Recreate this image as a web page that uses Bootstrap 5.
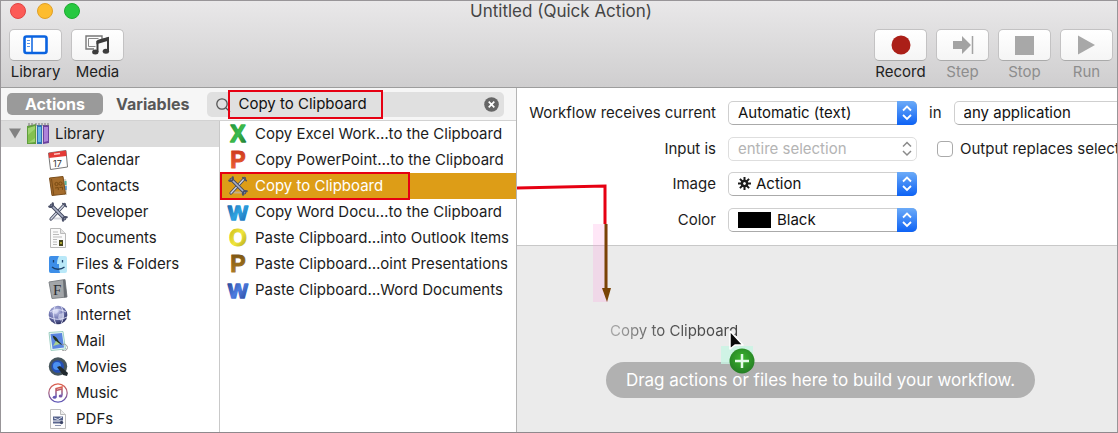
<!DOCTYPE html>
<html lang="en">
<head>
<meta charset="utf-8">
<meta name="viewport" content="width=device-width, initial-scale=1">
<title>Untitled (Quick Action)</title>
<link href="https://cdn.jsdelivr.net/npm/bootstrap@5.3.0/dist/css/bootstrap.min.css" rel="stylesheet">
<style>
body{font-family:Inter,"Liberation Sans",sans-serif;font-size:15px;line-height:20px;color:#1c1c1c;background:#fff}
.app-window{border:1px solid #989598;border-bottom-color:#8f898d;overflow:hidden;min-height:100vh}
.title-area{background:linear-gradient(#e9e8e9,#cfcecf);border-bottom:1px solid #9d9d9d;padding:0 4px 5px 8px}
.title-row{height:20px;position:relative}
.title-row h1{font-size:17px;line-height:20px;font-weight:400;color:#454545;margin:0}
.lights{position:absolute;left:1px;top:2px;gap:11px}
.light{width:16px;height:16px;border-radius:50%;border:1px solid}
.light.close-dot{background:#fc5b57;border-color:#e04543}
.light.min-dot{background:#fdbc2e;border-color:#e0a028}
.light.max-dot{background:#27c840;border-color:#1daa30}
.tool{border:0;background:none;padding:0;width:53px;color:#222;font-size:15px;line-height:20px}
.tool:disabled{color:#8d8d8d}
.tool-face{height:32px;border:1px solid #c3c2c3;border-bottom-color:#aaa;border-radius:5px;background:linear-gradient(#fff,#f5f5f5);margin-bottom:1px}
.tool-label{display:flex;justify-content:center;white-space:nowrap}
.tool-gap{gap:9px}
.left-pane{width:516px;border-right:1px solid #b5b5b5}
.filter-bar{height:33px;background:#f6f6f6;border-bottom:1px solid #d2d2d2;padding:0 12px 0 6px;gap:13px}
.tab-btn{border:0;border-radius:5px;height:22px;line-height:20px;padding:0;font-weight:700;font-size:16px;background:none;color:#585858}
.tab-btn.on{background:#9a9a9a;color:#fff;width:96px}
.search-field{background:#e0e0e0;border-radius:5px;height:25px;position:relative;margin-left:5px;padding:0 5px 0 31px}
.search-field input{border:0;background:none;outline:0;padding:0;width:100%;color:#111}
.search-icon{position:absolute;left:8px;top:5px}
.mark-box{position:absolute;border:2px solid #e60012;pointer-events:none;z-index:2}
.search-field .mark-box{left:21px;right:121px;top:-2px;bottom:-2px}
.clear-btn{border:0;background:none;padding:0;line-height:0}
.library-pane{width:219px;border-right:1px solid #c9c9c9}
.tree-row{flex:1 1 0;min-height:20px;display:flex;align-items:center;padding-left:47px;gap:8px;color:inherit;text-decoration:none}
.tree-row svg{flex:none}
.tree-row.top{background:#dcdcdc;padding-left:8px;gap:6px}
.act-row{height:26px;display:flex;align-items:center;gap:7px;padding-left:8px;position:relative;color:inherit;text-decoration:none;white-space:nowrap}
.act-row.sel{background:#dd9d17;color:#fff}
.act-row .mark-box{left:0;right:106px;top:-1px;bottom:-1px}
.settings{border-bottom:1px solid #c8c8c8;padding:12px 0 12px 0;display:grid;row-gap:9px;height:158px}
.set-row{display:flex;align-items:center;height:26px;white-space:nowrap}
.set-row>.set-label{width:199px;text-align:right;flex:none;margin-right:12px}
.popup{position:relative;width:189px;flex:none}
.popup select{appearance:none;width:100%;height:24px;border:1px solid #cfcfcf;border-bottom-color:#aaa;border-radius:5px;background:#fff;padding:0 34px 0 9px;color:#111;line-height:20px;outline:0}
.popup select:disabled{color:#b4b4b4;border-color:#dedede;opacity:1}
.popup .knob{position:absolute;right:0;top:0;pointer-events:none}
.popup .lead-icon{position:absolute;left:9px;top:4px;pointer-events:none}
.popup.gear select{padding-left:27px}
.popup.swatch select{padding-left:48px}
.swatch-chip{position:absolute;left:10px;top:4px;width:33px;height:16px;background:#000;pointer-events:none}
.out-check{appearance:none;width:16px;height:16px;border:1px solid #aaa;border-radius:4px;background:#fff;margin:0 7px 0 20px;flex:none}
.drop-area{background:#ebebeb;padding:116px 0 0 7px}
.drop-pill{background:#b1b1b1;color:#fff;border-radius:18px;font-size:17px;line-height:24px;padding:6px 20px;white-space:nowrap}
.pane-right{position:relative;min-width:0}
.arrow-line{position:absolute;left:0;top:94px;pointer-events:none}
.drag-ghost{position:absolute;left:93px;top:233px;background:linear-gradient(90deg,#aaa,#555 40%,#444);-webkit-background-clip:text;background-clip:text;color:transparent;white-space:nowrap}
.drag-cursor{position:absolute;left:200px;top:238px;pointer-events:none}
.ltr{font-family:"Liberation Sans",sans-serif;font-weight:700;overflow:visible;stroke-linejoin:round}
</style>
</head>
<body>
<svg width="0" height="0" class="position-absolute" aria-hidden="true">
<defs>
<linearGradient id="gBlue" x1="0" y1="0" x2="0" y2="1"><stop offset="0" stop-color="#6cabf8"/><stop offset="1" stop-color="#0d62f5"/></linearGradient>
<linearGradient id="gX" x1="0" y1="0" x2="1" y2="1"><stop offset="0" stop-color="#1f8f3c"/><stop offset=".5" stop-color="#3cba4c"/><stop offset="1" stop-color="#1c6f2c"/></linearGradient>
<linearGradient id="gP" x1="0" y1="0" x2="0" y2="1"><stop offset="0" stop-color="#c8321a"/><stop offset="1" stop-color="#f26a38"/></linearGradient>
<linearGradient id="gW" x1="0" y1="0" x2="1" y2="1"><stop offset="0" stop-color="#1d5ea8"/><stop offset=".5" stop-color="#2fa3e0"/><stop offset="1" stop-color="#1a61ae"/></linearGradient>
<linearGradient id="gO" x1="0" y1="0" x2="1" y2="1"><stop offset="0" stop-color="#c4b414"/><stop offset=".5" stop-color="#f0e63c"/><stop offset="1" stop-color="#a89a10"/></linearGradient>
<linearGradient id="gB" x1="0" y1="0" x2="0" y2="1"><stop offset="0" stop-color="#75500f"/><stop offset="1" stop-color="#b58426"/></linearGradient>
<linearGradient id="gV" x1="0" y1="0" x2="1" y2="1"><stop offset="0" stop-color="#27418f"/><stop offset=".5" stop-color="#4d7ce0"/><stop offset="1" stop-color="#27408e"/></linearGradient>
<radialGradient id="gGlobe" cx=".4" cy=".3" r=".7"><stop offset="0" stop-color="#c9cdf0"/><stop offset=".6" stop-color="#6a70ac"/><stop offset="1" stop-color="#2c3060"/></radialGradient>
<linearGradient id="gMus" x1="0" y1="0" x2="0" y2="1"><stop offset="0" stop-color="#e0604a"/><stop offset="1" stop-color="#5a55b8"/></linearGradient>
<radialGradient id="gAdd" cx=".5" cy=".4" r=".6"><stop offset="0" stop-color="#3db52e"/><stop offset="1" stop-color="#247d24"/></radialGradient>
<symbol id="tools" viewBox="0 0 20 20"><path d="M5.500 16.500h9" stroke="#b9bcc8" stroke-width="2" opacity=".6"/><g fill="none" stroke-linecap="round"><path d="M16.500 2.500 3 17" stroke="#444a60" stroke-width="3.200"/><path d="M16.500 2.500 3 17" stroke="#cfd3e0" stroke-width="1.400"/><path d="M3.500 3.500 16.500 16.500" stroke="#444a60" stroke-width="3.600"/><path d="M3.500 3.500 16.500 16.500" stroke="#aab0c6" stroke-width="1.700"/><path d="M1.200 4.500c2.500 1.200 4.300-.500 3.600-3.300M15 18.800c-.800-2.500 1-4.300 3.800-3.600" stroke="#4a5068" stroke-width="2"/><path d="m14.800 1.500 3.500 3.200" stroke="#4a5068" stroke-width="1.600"/></g></symbol>
<symbol id="knobOn" viewBox="0 0 20 24"><path d="M0 0h15a5 5 0 0 1 5 5v14a5 5 0 0 1-5 5H0z" fill="url(#gBlue)"/><path d="M6 9.500 10 5.500 14 9.500M6 14 10 18 14 14" fill="none" stroke="#fff" stroke-width="1.800"/></symbol>
</defs>
</svg>

<div class="app-window d-flex flex-column">
  <header class="title-area">
    <div class="title-row text-center">
      <div class="lights d-flex" aria-hidden="true">
        <span class="light close-dot"></span>
        <span class="light min-dot"></span>
        <span class="light max-dot"></span>
      </div>
      <h1>Untitled (Quick Action)</h1>
    </div>
    <div class="d-flex justify-content-between pt-2">
      <div class="d-flex tool-gap">
        <button class="tool" type="button"><span class="tool-face d-flex align-items-center justify-content-center"><svg width="25" height="20" viewBox="0 0 25 20"><rect x="1.500" y="1.500" width="22" height="16.500" rx="2" fill="#fff" stroke="#0a63e0" stroke-width="2.600"/><path d="M9 2v16" stroke="#0a63e0" stroke-width="1.500"/><path d="M4 5.500h3M4 8.500h3M4 11.500h3" stroke="#5b95e8" stroke-width="1.200"/></svg></span><span class="tool-label">Library</span></button>
        <button class="tool" type="button"><span class="tool-face d-flex align-items-center justify-content-center"><svg width="25" height="20" viewBox="0 0 25 20"><path d="M17 4V1H1v13h8" fill="none" stroke="#777" stroke-width="1.400"/><path d="M13.500 3.500h-10v8h7" fill="none" stroke="#888"/><path d="M12.500 6 23 3v13M12.500 6v11" fill="none" stroke="#3c3c3c" stroke-width="2"/><path d="M11.500 5.800 24 2v3.500L11.500 9.300z" fill="#3c3c3c"/><ellipse cx="10.300" cy="17" rx="3.200" ry="2.500" fill="#3c3c3c"/><ellipse cx="20.900" cy="16.300" rx="3.200" ry="2.500" fill="#3c3c3c"/></svg></span><span class="tool-label">Media</span></button>
      </div>
      <div class="d-flex tool-gap">
        <button class="tool" type="button"><span class="tool-face d-flex align-items-center justify-content-center"><svg width="20" height="20"><circle cx="10" cy="10" r="9.500" fill="#ab1f18"/></svg></span><span class="tool-label">Record</span></button>
        <button class="tool" type="button" disabled><span class="tool-face d-flex align-items-center justify-content-center"><svg width="22" height="20"><path d="M1 6h9V1l9 9-9 9v-5H1z" fill="#a3a3a3"/><path d="M20.500 1v18" stroke="#a3a3a3" stroke-width="1.500"/></svg></span><span class="tool-label">Step</span></button>
        <button class="tool" type="button" disabled><span class="tool-face d-flex align-items-center justify-content-center"><svg width="19" height="19"><path d="M0 0h19v19H0z" fill="#a8a8a8"/></svg></span><span class="tool-label">Stop</span></button>
        <button class="tool" type="button" disabled><span class="tool-face d-flex align-items-center justify-content-center"><svg width="17" height="20"><path d="M0 .500 17 10 0 19.500z" fill="#a8a8a8"/></svg></span><span class="tool-label">Run</span></button>
      </div>
    </div>
  </header>

  <main class="d-flex flex-grow-1 overflow-hidden">
    <section class="left-pane d-flex flex-column flex-shrink-0">
      <div class="filter-bar d-flex align-items-center">
        <button class="tab-btn on" type="button">Actions</button>
        <button class="tab-btn" type="button">Variables</button>
        <div class="search-field d-flex align-items-center flex-grow-1">
          <svg class="search-icon" width="16" height="16"><circle cx="7" cy="7" r="5.200" fill="none" stroke="#555" stroke-width="1.300"/><path d="m11 11 4 4" stroke="#555" stroke-width="1.300"/></svg>
          <input type="text" aria-label="Search actions" value="Copy to Clipboard">
          <button class="clear-btn" type="button" aria-label="Clear search"><svg width="15" height="15"><circle cx="7.500" cy="7.500" r="7.300" fill="#666"/><path d="m4.700 4.700 5.600 5.600m0-5.600-5.600 5.600" stroke="#fff" stroke-width="1.700"/></svg></button>
          <span class="mark-box"></span>
        </div>
      </div>
      <div class="d-flex flex-grow-1">
        <nav class="library-pane d-flex flex-column" aria-label="Library">
          <a href="#" class="tree-row top"><svg width="12" height="11"><path d="M0 .500h12L6 10.500z" fill="#828282"/></svg><svg width="22" height="22" viewBox="0 0 22 22"><path d="M0 3 9 1v20H0z" fill="#5f9e3c"/><path d="M1 5 8 3v16l-7 1z" fill="#9fd370"/><path d="M1 12 8 6v9l-7 5z" fill="#84c04f"/><path d="M10 2h5v19h-5z" fill="#2e74b6"/><path d="M11 4h3v15h-3z" fill="#6cb8e6"/><path d="M16 2h6v18l-6 1z" fill="#6b429f"/><path d="M17 4h4v14l-4 1z" fill="#ae84da"/><path d="M2 0v3M5 0v3M9 0v3M12 0v3M15 0v3M18 0v3M21 0v3" stroke="#777"/></svg><span>Library</span></a>
          <a href="#" class="tree-row"><svg width="20" height="20" viewBox="0 0 20 20"><path d="M.500 3 18 .500 19.500 17 2.500 19.500z" fill="#fff" stroke="#777"/><path d="M.500 3 18 .500 18.500 6 1 8z" fill="#e33a36"/><path d="m6 4.300 6-.900" stroke="#ffc8c4" stroke-width="1.500"/><text x="5" y="16.500" font-size="9" fill="#333">17</text></svg><span>Calendar</span></a>
          <a href="#" class="tree-row"><svg width="20" height="20" viewBox="0 0 20 20"><path d="M16 3h2l1 4v12h-3z" fill="#d8d4c8"/><path d="M16.500 5h2v4h-2z" fill="#50b4a0"/><path d="M16.800 10h2v4h-2z" fill="#599bd2"/><path d="M1.500 2 15 .500 17.500 18 4 19.500z" fill="#a46c2c" stroke="#7a4d1a"/><path d="M3.500 3 5.800 19" stroke="#7a4d1a"/><g fill="none" stroke="#7a4b12"><circle cx="8.500" cy="8" r="1.600"/><circle cx="12.500" cy="7.600" r="1.600"/><path d="m7 12 3.300-.400v2.500M11.500 11.500l3-.300v2.500"/></g></svg><span>Contacts</span></a>
          <a href="#" class="tree-row"><svg width="20" height="20"><use href="#tools"/></svg><span>Developer</span></a>
          <a href="#" class="tree-row"><svg width="20" height="20" viewBox="0 0 20 20"><path d="M2.500.500h10l5 5v14h-15z" fill="#fafafa" stroke="#b8b8b8"/><path d="M12.500.500v5h5" fill="#e3e3e3" stroke="#bbb"/><path d="M5 4h5M5 6.500h6M5 9h9M5 11.500h4M5 14h4M5 16.500h4" stroke="#bbb"/><path d="M11 12h4v6h-4z" fill="#45451d"/><path d="M12 14h2v2h-2z" fill="#a8a334"/></svg><span>Documents</span></a>
          <a href="#" class="tree-row"><svg width="20" height="20" viewBox="0 0 20 20"><rect x="1" y="2" width="18" height="17" rx="2" fill="#b9e8f8"/><path d="M3 2h8c-1.500 3-2 5-2 8h2c0 3 0 6 1 9H3a2 2 0 0 1-2-2V4a2 2 0 0 1 2-2z" fill="#3d8ee8"/><path d="M5.500 6v2.500M14.500 6v2.500M4 13c3 3 9 3 12.500 0" fill="none" stroke="#1b3f6a" stroke-width="1.300"/></svg><span>Files &amp; Folders</span></a>
          <a href="#" class="tree-row"><svg width="20" height="20" viewBox="0 0 20 20"><path d="M1 3 17 .500 19 18 4 19.500z" fill="#a3a6a9" stroke="#808488"/><path d="M15 1h2l2 17-3 .500z" fill="#6b6f74"/><text x="5" y="15.500" font-size="15" font-family="Liberation Serif,serif" fill="#2b2e33">F</text></svg><span>Fonts</span></a>
          <a href="#" class="tree-row"><svg width="20" height="20" viewBox="0 0 20 20"><circle cx="10" cy="10" r="9.300" fill="url(#gGlobe)"/><path d="M2 7c5-3 11-3 16 0M1 12c6 3 12 3 18 0M7 1c-2 6-2 12 1 18M13 1c3 6 3 12 0 18" fill="none" stroke="#e4e6fa" stroke-width=".900"/><path d="m5 5 4-1 2 2-3 3-4-1zM11 9l4-1 1 4-3 4-3-3z" fill="#eceefe" opacity=".550"/></svg><span>Internet</span></a>
          <a href="#" class="tree-row"><svg width="20" height="20" viewBox="0 0 20 20"><path d="M1 1.500 15 .500 17.500 18 3 19.500z" fill="#e9f7f2" stroke="#9fcfc3"/><path d="m2.500 3 11.500-1 2 14.500L4.500 18z" fill="#5b86e0"/><path d="M4.500 4.500c3 .500 5 3 6 5.500l4 4-4-1.500C8 10.500 5.500 8.500 4.500 4.500z" fill="#23331f"/><path d="m5 15 3-5 4 3z" fill="#a9d28e"/><path d="M14 14a3.300 3.300 0 1 1 0 5" fill="none" stroke="#9a9a9a"/></svg><span>Mail</span></a>
          <a href="#" class="tree-row"><svg width="20" height="20" viewBox="0 0 20 20"><circle cx="10" cy="9.500" r="9.200" fill="#46555c"/><circle cx="9.700" cy="9.500" r="6.300" fill="#244fb4"/><circle cx="9" cy="9" r="4" fill="#4b91f0"/><path d="m9 10 3-1 8 7-1 3-4-1z" fill="#20292e"/></svg><span>Movies</span></a>
          <a href="#" class="tree-row"><svg width="20" height="20" viewBox="0 0 20 20"><circle cx="10" cy="10" r="9.200" fill="#fff" stroke="url(#gMus)" stroke-width="1.200"/><path d="M8 14V5.500l6-1.500v8.500M8 7.500 14 6" fill="none" stroke="url(#gMus)" stroke-width="1.500"/><ellipse cx="6.600" cy="14.300" rx="1.900" ry="1.500" fill="#6458b4"/><ellipse cx="12.600" cy="12.900" rx="1.900" ry="1.500" fill="#7858a8"/></svg><span>Music</span></a>
          <a href="#" class="tree-row"><svg width="20" height="20" viewBox="0 0 20 20"><path d="M2.500.500h10l5 5v14h-15z" fill="#fdfdfd" stroke="#bcbcbc"/><path d="M12.500.500v5h5" fill="#eee" stroke="#bbb"/><path d="M5 7.500h10v4H5z" fill="#54618a"/><path d="m6 9 4 1.500L14 8" stroke="#dfe4f4" fill="none"/><path d="M5 13.500h7" stroke="#5a668f" stroke-width="2"/><circle cx="13.500" cy="13.500" r="1.700" fill="#3c4568"/><path d="M7 16.500h6" stroke="#8b93b0"/></svg><span>PDFs</span></a>
        </nav>
        <div class="flex-grow-1">
          <a href="#" class="act-row"><svg width="20" height="26" class="ltr"><text x="10" y="21" text-anchor="middle" font-size="23" fill="url(#gX)" stroke="url(#gX)" stroke-width="1.500">X</text></svg><span>Copy Excel Work…to the Clipboard</span></a>
          <a href="#" class="act-row"><svg width="20" height="26" class="ltr"><text x="10" y="21" text-anchor="middle" font-size="23" fill="url(#gP)" stroke="url(#gP)">P</text></svg><span>Copy PowerPoint…to the Clipboard</span></a>
          <a href="#" class="act-row sel"><svg width="20" height="20"><use href="#tools"/></svg><span>Copy to Clipboard</span><span class="mark-box"></span></a>
          <a href="#" class="act-row"><svg width="20" height="26" class="ltr"><text x="10" y="21" text-anchor="middle" font-size="21" fill="url(#gW)" stroke="url(#gW)" stroke-width="1.500">W</text></svg><span>Copy Word Docu…to the Clipboard</span></a>
          <a href="#" class="act-row"><svg width="20" height="26" class="ltr"><text x="10" y="21" text-anchor="middle" font-size="23" fill="url(#gO)" stroke="url(#gO)">O</text></svg><span>Paste Clipboard…into Outlook Items</span></a>
          <a href="#" class="act-row"><svg width="20" height="26" class="ltr"><text x="10" y="21" text-anchor="middle" font-size="23" fill="url(#gB)" stroke="url(#gB)">P</text></svg><span>Paste Clipboard…oint Presentations</span></a>
          <a href="#" class="act-row"><svg width="20" height="26" class="ltr"><text x="10" y="21" text-anchor="middle" font-size="21" fill="url(#gV)" stroke="url(#gV)" stroke-width="1.500">W</text></svg><span>Paste Clipboard…Word Documents</span></a>
        </div>
      </div>
    </section>

    <section class="pane-right flex-grow-1 d-flex flex-column">
      <form class="settings">
        <div class="set-row">
          <label class="set-label" for="recv">Workflow receives current</label>
          <span class="popup"><select id="recv"><option>Automatic (text)</option></select><svg class="knob" width="20" height="24"><use href="#knobOn"/></svg></span>
          <label class="mx-2 px-1" for="app">in</label>
          <span class="popup"><select id="app"><option>any application</option></select><svg class="knob" width="20" height="24"><use href="#knobOn"/></svg></span>
        </div>
        <div class="set-row">
          <label class="set-label" for="inp">Input is</label>
          <span class="popup"><select id="inp" disabled><option>entire selection</option></select><svg class="knob" width="20" height="24"><path d="M6 9.500 10 5.500 14 9.500M6 14 10 18 14 14" fill="none" stroke="#8a8a8a" stroke-width="1.500"/></svg></span>
          <input class="out-check" type="checkbox" id="outp"><label for="outp">Output replaces selected text</label>
        </div>
        <div class="set-row">
          <label class="set-label" for="img">Image</label>
          <span class="popup gear"><select id="img"><option>Action</option></select><svg class="lead-icon" width="15" height="15" viewBox="-7.500 -7.500 15 15"><g stroke="#1c1c1c" stroke-width="2"><path d="M0-6.500V-3M0 6.500V3M-6.500 0H-3M6.500 0H3M-4.600-4.600-2-2M4.600 4.600 2 2M-4.600 4.600-2 2M4.600-4.600 2-2"/><circle r="2.600" fill="none" stroke-width="2.400"/></g></svg><svg class="knob" width="20" height="24"><use href="#knobOn"/></svg></span>
        </div>
        <div class="set-row">
          <label class="set-label" for="col">Color</label>
          <span class="popup swatch"><select id="col"><option>Black</option></select><span class="swatch-chip"></span><svg class="knob" width="20" height="24"><use href="#knobOn"/></svg></span>
        </div>
      </form>
      <div class="drop-area flex-grow-1 d-flex justify-content-center align-items-start">
        <div class="drop-pill">Drag actions or files here to build your workflow.</div>
      </div>

      <svg class="arrow-line" width="110" height="124"><path d="M76 42h15v78H76z" fill="#ff9ee0" opacity=".250"/><path d="M0 6 88 4v38" fill="none" stroke="#e60012" stroke-width="3"/><path d="M89 42v64" stroke="#7a4306" stroke-width="3"/><path d="M85 106h9l-4 14z" fill="#7a4306"/></svg>
      <span class="drag-ghost">Copy to Clipboard</span>
      <svg class="drag-cursor" width="50" height="54"><rect x="4" y="20" width="32" height="18" fill="#c8f5e4" opacity=".800"/><path d="M13 5v18l5-4h8z" fill="#0a0a0a" stroke="#fff" stroke-width="1.500" stroke-linejoin="round"/><circle cx="25" cy="35" r="12.500" fill="url(#gAdd)"/><path d="M25 28v14M18 35h14" stroke="#e4fbe8" stroke-width="2.500"/></svg>
    </section>
  </main>
</div>
<script src="https://cdn.jsdelivr.net/npm/bootstrap@5.3.0/dist/js/bootstrap.bundle.min.js"></script>
</body>
</html>
